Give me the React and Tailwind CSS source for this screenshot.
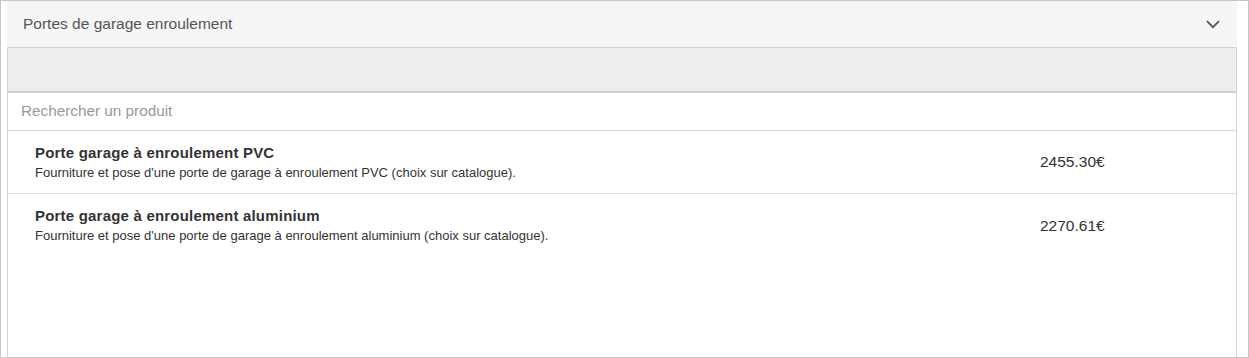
import React from "react";

const items = [
  {
    title: "Porte garage à enroulement PVC",
    desc: "Fourniture et pose d'une porte de garage à enroulement PVC (choix sur catalogue).",
    price: "2455.30€",
  },
  {
    title: "Porte garage à enroulement aluminium",
    desc: "Fourniture et pose d'une porte de garage à enroulement aluminium (choix sur catalogue).",
    price: "2270.61€",
  },
];

export default function App() {
  return (
    <div
      className="w-[1249px] h-[358px] border border-[#c6c6c6] bg-white pl-[6px] pr-[11px] flex flex-col overflow-hidden"
      style={{ fontFamily: '"Liberation Sans", Arial, sans-serif' }}
    >
      <div className="h-[46px] shrink-0 bg-[#f5f5f5] flex items-center justify-between pl-4 pr-[17px]">
        <span className="text-[15.5px] text-[#555]">Portes de garage enroulement</span>
        <svg width="14" height="9" viewBox="0 0 14 9" fill="none">
          <path d="M1 1.2 L7 7.2 L13 1.2" stroke="#555" strokeWidth="1.8" />
        </svg>
      </div>
      <div className="flex-1 flex flex-col border-x border-[#d4d4d4]">
        <div className="h-[46px] shrink-0 bg-[#ededed] border-t border-[#d4d4d4] border-b-2 border-b-[#cfcfcf]" />
        <div className="h-[38px] shrink-0 border-b border-[#dcdcdc] flex items-center px-[13px]">
          <span className="text-[15.3px] text-[#999]">Rechercher un produit</span>
        </div>
        {items.map((it, i) => (
          <div
            key={i}
            className={`h-[63px] shrink-0 grid grid-cols-[1fr_196px] items-center pl-[27px] ${
              i === 0 ? "border-b border-[#dcdcdc]" : ""
            }`}
          >
            <div className="flex flex-col">
              <span className="text-[15px] font-bold text-[#333] leading-[18px] tracking-[0.2px]">{it.title}</span>
              <span className="text-[13px] text-[#333] leading-[16px] mt-[3px]">{it.desc}</span>
            </div>
            <span className="text-[15.5px] text-[#333]">{it.price}</span>
          </div>
        ))}
      </div>
    </div>
  );
}
